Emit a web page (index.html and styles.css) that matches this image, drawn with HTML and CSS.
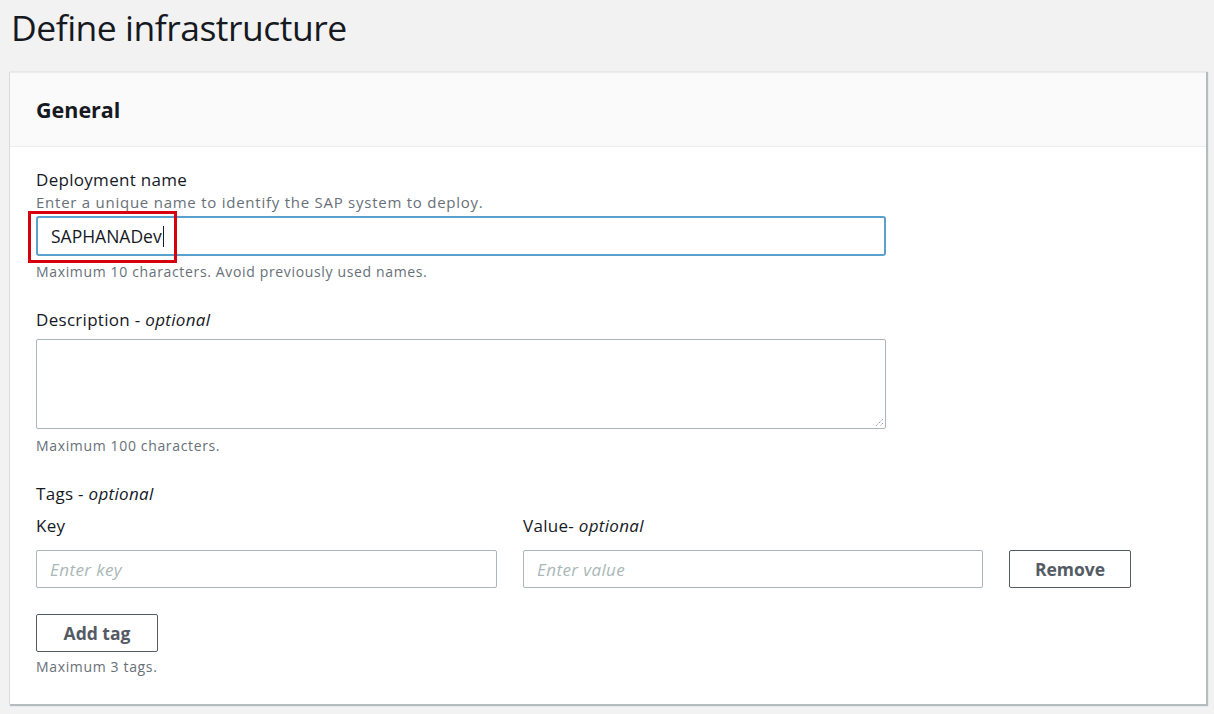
FILE: index.html
```html
<!DOCTYPE html>
<html>
<head>
<meta charset="utf-8">
<link rel="stylesheet" href="styles.css">
</head>
<body>
<h1 class="page-title">Define infrastructure</h1>
<section class="card">
  <header class="card-header"><h2>General</h2></header>
  <div class="card-body">
    <div class="field">
      <div class="label">Deployment name</div>
      <div class="hint">Enter a unique name to identify the SAP system to deploy.</div>
      <div class="input-wrap">
        <div class="input focused"><span class="value">SAPHANADev</span><span class="caret"></span></div>
        <div class="highlight"></div>
      </div>
      <div class="constraint">Maximum 10 characters. Avoid previously used names.</div>
    </div>
    <div class="field">
      <div class="label">Description - <i>optional</i></div>
      <div class="textarea"><svg class="grip" width="10" height="10" viewBox="0 0 10 10"><path d="M9 2 L2 9 M9 6 L6 9" stroke="#8a8a8a" stroke-width="1" stroke-dasharray="1.2 1"/></svg></div>
      <div class="constraint">Maximum 100 characters.</div>
    </div>
    <div class="field tags">
      <div class="label">Tags - <i>optional</i></div>
      <div class="tag-grid">
        <div class="sub-label">Key</div>
        <div class="sub-label">Value- <i>optional</i></div>
        <div></div>
        <div class="input small"><span class="placeholder">Enter key</span></div>
        <div class="input small"><span class="placeholder">Enter value</span></div>
        <button class="btn">Remove</button>
      </div>
      <button class="btn add">Add tag</button>
      <div class="constraint tight">Maximum 3 tags.</div>
    </div>
  </div>
</section>
</body>
</html>
```
FILE: styles.css
```css
* { box-sizing: border-box; }
html, body { margin: 0; padding: 0; }
body {
  background: #f2f2f2;
  font-family: "Open Sans", "Noto Sans", sans-serif;
  color: #16191f;
  width: 1214px;
  height: 714px;
  overflow: hidden;
}
.page-title {
  margin: 0;
  padding: 3px 0 0 11px;
  height: 72px;
  font-size: 35.5px;
  font-weight: 400;
  letter-spacing: -0.5px;
  color: #16191f;
}
.card {
  margin-left: 10px;
  width: 1196px;
  background: #fff;
  border-top: 1px solid #eaeded;
  box-shadow: 1px 1px 1px 1px rgba(0,28,36,0.25), -1px 0 0 0 #e4e4e4;
}
.card-header {
  height: 74px;
  background: #fafafa;
  border-bottom: 1px solid #eaeded;
  padding: 0 26px;
  display: flex;
  align-items: center;
}
.card-header h2 {
  margin: 0;
  font-size: 21.5px;
  font-weight: 700;
}
.card-body {
  padding: 22px 26px 27px;
}
.label, .sub-label {
  font-size: 17px;
  line-height: 22px;
  letter-spacing: 0.3px;
  color: #16191f;
}
.label i, .sub-label i { font-style: italic; }
.hint {
  font-size: 15px;
  line-height: 22px;
  letter-spacing: 0.75px;
  color: #687078;
  margin-bottom: 3px;
}
.constraint {
  font-size: 14px;
  line-height: 20px;
  letter-spacing: 0.65px;
  color: #687078;
  margin-top: 6px;
}
.field { margin-bottom: 27px; }
.field.tags { margin-bottom: 0; }
.input-wrap { position: relative; width: 850px; }
.input {
  height: 40px;
  border: 1px solid #aab7b8;
  border-radius: 2px;
  display: flex;
  align-items: center;
  padding: 0 13px;
  font-size: 17.5px;
  background: #fff;
}
.input.focused {
  border: 2px solid #5aa2cd;
  border-radius: 3px;
}
.caret {
  display: inline-block;
  width: 1px;
  height: 21px;
  background: #16191f;
  margin-left: 1px;
}
.highlight {
  position: absolute;
  left: -8px;
  top: -5px;
  width: 149px;
  height: 52px;
  border: 3px solid #d6000f;
}
.textarea {
  position: relative;
  width: 850px;
  height: 90px;
  border: 1px solid #aab7b8;
  border-radius: 2px;
  margin-top: 8px;
}
.field .textarea + .constraint { margin-top: 7px; }
.grip { position: absolute; right: 1px; bottom: 1px; }
.tag-grid {
  display: grid;
  grid-template-columns: 461px 460px 122px;
  column-gap: 26px;
  margin-top: 10px;
}
.sub-label { margin-bottom: 13px; }
.input.small {
  height: 38px;
  width: 100%;
}
.placeholder {
  color: #aab7b8;
  font-style: italic;
  font-size: 17px;
  letter-spacing: 0.4px;
}
.btn {
  font-family: inherit;
  height: 38px;
  width: 122px;
  background: #fff;
  border: 1px solid #545b64;
  border-radius: 2px;
  font-size: 17.5px;
  font-weight: 700;
  color: #545b64;
  padding: 0;
}
.btn.add { margin-top: 26px; display: block; }
.constraint.tight { margin-top: 5px; }
```
